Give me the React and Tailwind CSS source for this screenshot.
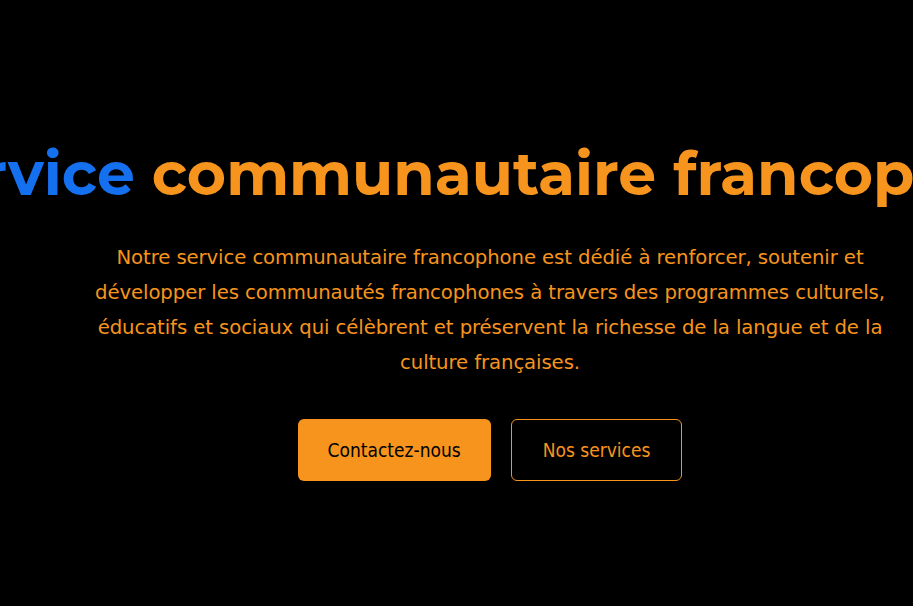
import React from 'react';

const App = () => {
  return (
    <div className="h-[606px] w-full overflow-hidden bg-black">
      <section className="w-[980px] flex flex-col items-center pt-[138px]">
        <h1
          className="whitespace-nowrap text-[60px] leading-[1.2] font-bold text-center"
          style={{ fontFamily: "Montserrat, 'Open Sans', sans-serif" }}
        >
          <span className="text-[#1570ef]">Service</span>{' '}
          <span className="text-[#f7941d]">communautaire francophone</span>
        </h1>

        <p
          className="mt-[30px] max-w-[820px] text-center text-[19.7px] leading-[35px] tracking-[-0.1px] text-[#f7941d]"
          style={{ fontFamily: "Tahoma, 'DejaVu Sans', sans-serif" }}
        >
          Notre service communautaire francophone est dédié à renforcer, soutenir et développer les communautés
          francophones à travers des programmes culturels, éducatifs et sociaux qui célèbrent et préservent la
          richesse de la langue et de la culture françaises.
        </p>

        {/* CTA */}
        <div
          className="mt-[39px] flex gap-5"
          style={{ fontFamily: "Tahoma, 'DejaVu Sans Condensed', sans-serif" }}
        >
          <button className="h-[62px] px-[30px] rounded-md bg-[#f7941d] text-black text-[19px]">
            Contactez-nous
          </button>
          <button className="h-[62px] px-[31px] rounded-md border border-[#f7941d] text-[#f7941d] text-[19px]">
            Nos services
          </button>
        </div>
      </section>
    </div>
  );
};

export default App;
